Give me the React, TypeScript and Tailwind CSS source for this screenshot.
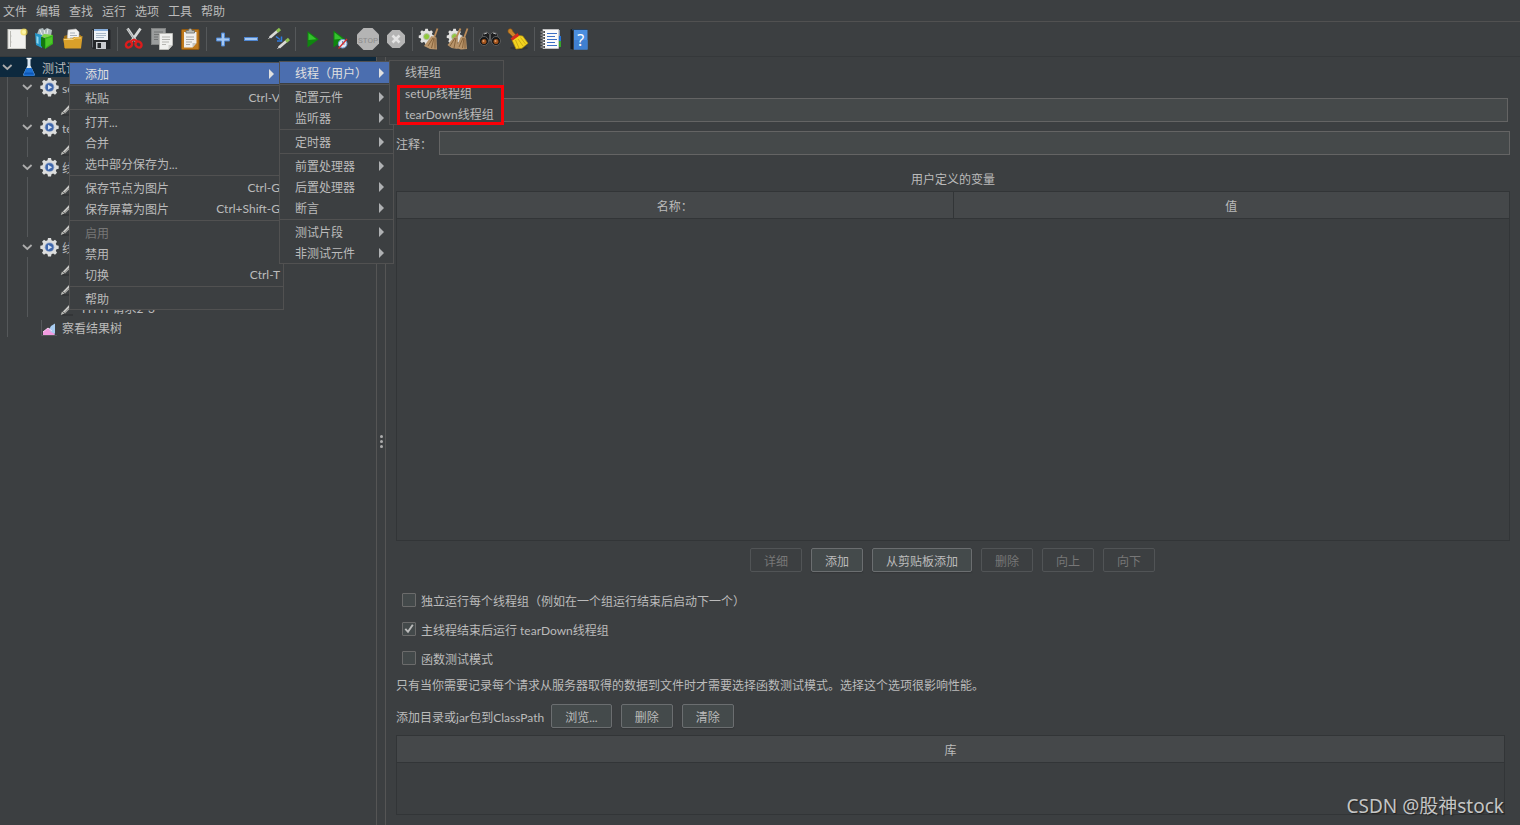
import React, { useState } from 'react';

type IconProps = { children: React.ReactNode };

function Icon24({ children }: IconProps) {
  return (
    <svg width="24" height="24" viewBox="0 0 24 24" aria-hidden="true" className="shrink-0">
      {children}
    </svg>
  );
}

const NewIcon = () => (
  <Icon24>
    <rect x="3" y="2.5" width="17.5" height="19" fill="#f1f1ef" stroke="#c9c9c4" />
    <path d="M5.5 4v16M5 9h1.5M5 15h1.5" stroke="#b9b9b4" strokeWidth="1" />
    <circle cx="19" cy="5" r="3.600" fill="#f3dc4a" opacity=".7" />
    <circle cx="19" cy="5" r="2" fill="#fdf6a6" />
  </Icon24>
);

const TemplatesIcon = () => (
  <Icon24>
    <path d="M4 7 6 2l4-1 1 2 3-2 5 2-1 6-7 2z" fill="#aebabd" />
    <path d="M7 3l2 5M11 3l1 4M15 2l-1 5" stroke="#e9eeee" />
    <path d="M2 6l7 2v13l-6-3z" fill="#2596c8" />
    <path d="M3.5 9l2 1v7l-2-1z" fill="#8fd6ef" />
    <path d="M8 10l3-3 9 1-2 3z" fill="#7ed649" />
    <path d="M8 10l4 1v11l-4-3z" fill="#13780f" />
    <path d="M12 11l8-3v9l-8 5z" fill="#36b51b" />
    <path d="M13 12l6-2v6l-6 4z" fill="#5ed233" opacity=".6" />
  </Icon24>
);

const OpenIcon = () => (
  <Icon24>
    <path d="M3 9l3-1h14v13H3z" fill="#9a6c14" />
    <path d="M7 3l8-1 3 3v10H6z" fill="#f3f3f3" stroke="#bcbcbc" strokeWidth=".6" />
    <path d="M9 6h5M9 8.500h7M9 11h7" stroke="#a9b0b8" />
    <path d="M2 11.500h9l2-1.500h4l4.500-1L20 21.500H4z" fill="#d9a02a" />
    <path d="M3 12.500h9l2-1.500h6" stroke="#f6d27a" fill="none" />
  </Icon24>
);

const SaveIcon = () => (
  <Icon24>
    <path d="M2.500 3.500l1-1.500h17l1 1.500V22H4l-1.500-1.500z" fill="#24272a" />
    <path d="M3.500 3v17.500" stroke="#6a6e73" />
    <rect x="5" y="2" width="14" height="11" fill="#eef3f8" />
    <rect x="5" y="2" width="14" height="2" fill="#88aedb" />
    <path d="M7 6.500h10M7 8.500h10M7 10.500h8" stroke="#a9b9c9" />
    <rect x="7" y="15" width="10" height="7" fill="#c9ccd0" />
    <rect x="8.500" y="16" width="3.500" height="5" fill="#25282b" />
  </Icon24>
);

const CutIcon = () => (
  <Icon24>
    <path d="M5.500 1.500L14.500 15M18.500 1.500L9 15" stroke="#d6d8d8" strokeWidth="2.800" />
    <path d="M5.500 2L14 14.500" stroke="#8d9191" strokeWidth=".7" />
    <ellipse cx="7" cy="17.500" rx="3.300" ry="2.700" transform="rotate(-40 7 17.500)" fill="none" stroke="#dd1c1c" strokeWidth="2.400" />
    <ellipse cx="16.500" cy="17.500" rx="3.300" ry="2.700" transform="rotate(40 16.500 17.500)" fill="none" stroke="#dd1c1c" strokeWidth="2.400" />
    <path d="M9 14l3-1.500 3 1.500" stroke="#dd1c1c" strokeWidth="2" fill="none" />
  </Icon24>
);

const CopyIcon = () => (
  <Icon24>
    <rect x="1.500" y="1.500" width="14" height="16" fill="#9b9d9d" stroke="#7f8181" />
    <path d="M4 5h9M4 7.500h9M4 10h4M4 12.500h4" stroke="#737575" />
    <path d="M9.500 6.500h13V18l-4 4.500h-9z" fill="#f0f0ee" stroke="#bbbbb7" />
    <path d="M12 10h8M12 12.500h8M12 15h7M12 17.500h4" stroke="#b4b4b0" />
    <path d="M22.500 18l-4 4.500V18z" fill="#cfcfcb" />
  </Icon24>
);

const PasteIcon = () => (
  <Icon24>
    <rect x="3.500" y="2.500" width="17.500" height="20" rx="1" fill="#c07a1c" stroke="#8e5810" />
    <path d="M6 5h12.500v11l-4 4.500H6z" fill="#f0f0ee" />
    <path d="M8 10h8M8 12.500h8M8 15h6M8 17.500h4" stroke="#a9a9a5" />
    <path d="M18.500 16l-4 4.500V16z" fill="#c4c4c0" />
    <path d="M8 6V3.500h2.500C10.500 1 14 1 14 3.500h2.500V6z" fill="#b9bcb6" stroke="#696c68" strokeWidth=".8" />
  </Icon24>
);

const PlusIcon = () => (
  <Icon24>
    <path d="M10.500 6h3v5h5v3h-5v5h-3v-5h-5v-3h5z" fill="#a5c8f2" stroke="#4f86d0" strokeWidth="1" />
  </Icon24>
);

const MinusIcon = () => (
  <Icon24>
    <rect x="5.500" y="10.500" width="13" height="3" fill="#a5c8f2" stroke="#4f86d0" />
  </Icon24>
);

const ToggleIcon = () => (
  <Icon24>
    <path d="M3 10.500L10.500 4" stroke="#d9d9d6" strokeWidth="2.800" />
    <path d="M10 4.500L13 2" stroke="#8cc152" strokeWidth="3.200" />
    <path d="M1.500 11.500l2-1.500" stroke="#efefef" strokeWidth="1" />
    <path d="M12 20.500L19.500 14" stroke="#d9d9d6" strokeWidth="2.800" />
    <path d="M19 14.500L22 12" stroke="#8cc152" strokeWidth="3.200" />
    <path d="M10.500 21.500l2-1.500" stroke="#efefef" strokeWidth="1" />
    <path d="M9 9.500l4 3M14.500 9.500v4.500H10" stroke="#2f7be0" strokeWidth="1.500" fill="none" />
  </Icon24>
);

const RunIcon = () => (
  <Icon24>
    <path d="M7.500 4L18.700 12.200 7.500 20.500z" fill="#0f860f" />
    <path d="M8.500 6l8 6.200-8 .8z" fill="#35c22e" />
  </Icon24>
);

const RunNoPauseIcon = () => (
  <Icon24>
    <path d="M5.500 3.500L17 12 5.500 20.500z" fill="#0f860f" />
    <path d="M6.500 5.500l8 6.200-8 .8z" fill="#35c22e" />
    <circle cx="14.700" cy="16.700" r="4.300" fill="#dfe9f5" stroke="#6f9fd6" />
    <path d="M14.700 14v3h2" stroke="#5479a8" fill="none" />
    <path d="M10.500 21.500L19 12" stroke="#d32f2f" strokeWidth="1.300" />
  </Icon24>
);

const StopIcon = () => (
  <Icon24>
    <path d="M7.500 1h9L23 7.500v9L16.500 23h-9L1 16.500v-9z" fill="#b4b4b4" />
    <text x="12" y="15.500" textAnchor="middle" fontSize="8" fontFamily="Roboto, sans-serif" fontWeight="400" fill="#8c8c8c">
      STOP
    </text>
  </Icon24>
);

const ShutdownIcon = () => (
  <Icon24>
    <path d="M8.300 3h7.400L21 8.300v7.400L15.700 21H8.300L3 15.700V8.300z" fill="#b4b4b4" />
    <path d="M8.500 8.500l7 7M15.500 8.500l-7 7" stroke="#e4e4e4" strokeWidth="2.600" />
  </Icon24>
);

const gearPoints =
  'M8 1h3l.5 2.200 1.600.7L15 2.700l2 2-1.200 1.900.7 1.600 2.200.5v3l-2.200.5-.7 1.600L17 15.700l-2 2-1.900-1.200-1.600.7L11 19.400H8l-.5-2.200-1.600-.7L4 17.700l-2-2 1.200-1.900-.7-1.600-2.200-.5v-3l2.200-.5.7-1.600L2 4.700l2-2 1.900 1.200 1.600-.7z';

const ClearIcon = () => (
  <Icon24>
    <g transform="translate(1.500 1) scale(.85)">
      <path d={gearPoints} fill="#e2e2e0" />
      <circle cx="9.500" cy="10.200" r="3.600" fill="#8fc93c" stroke="#b9bcb4" />
    </g>
    <path d="M20.500 1.500L17 11" stroke="#b98a58" strokeWidth="1.800" />
    <path d="M14.500 9l5 1.500.5 12-7-.5-6-3z" fill="#b8946a" />
    <path d="M16 11l-5 8M17 11l-2.500 10M18 11.500v10" stroke="#7f5c36" strokeWidth=".9" />
  </Icon24>
);

const ClearAllIcon = () => (
  <Icon24>
    <g transform="translate(1.500 1) scale(.85)">
      <path d={gearPoints} fill="#e2e2e0" />
      <circle cx="9.500" cy="10.200" r="3.600" fill="#8fc93c" stroke="#b9bcb4" />
    </g>
    <path d="M15.500 1.500L11 11M22.500 1.500L19 11" stroke="#b98a58" strokeWidth="1.800" />
    <path d="M9.500 9.500l3.500 1-.5 11.500-6-1-4-3zM16 9.500l5 1 1 11.500-6 .5-5-1.500z" fill="#b8946a" />
    <path d="M10 11l-5 8M11 11l-2 10M18 11l-4 9M19 11l-1.500 10M20 11.500v10" stroke="#7f5c36" strokeWidth=".9" />
  </Icon24>
);

const SearchIcon = () => (
  <Icon24>
    <path d="M5 6.500L9 5l2.500 2.500V14L3 16zM19 6.500L15 5l-2.500 2.500V14l8.500 2z" fill="#1d1e1f" stroke="#686a6b" strokeWidth=".8" />
    <circle cx="6" cy="14" r="4.500" fill="#151617" stroke="#5c5e5f" />
    <circle cx="18" cy="14" r="4.500" fill="#151617" stroke="#5c5e5f" />
    <circle cx="6" cy="14.500" r="2.500" fill="#a4541c" />
    <circle cx="18" cy="14.500" r="2.500" fill="#a4541c" />
    <circle cx="5.500" cy="14" r="1" fill="#e0a070" />
    <circle cx="17.500" cy="14" r="1" fill="#e0a070" />
    <path d="M6 7l3-1M15 6l3 1" stroke="#b5b7b8" />
  </Icon24>
);

const BroomIcon = () => (
  <Icon24>
    <ellipse cx="13" cy="21" rx="9" ry="1.800" fill="#26292b" opacity=".5" />
    <path d="M2.500 2.500C4 1 6.500 2 6.500 4L10 8 7 10 3.500 6.500C2 6 1.500 4 2.500 2.500z" fill="#c8842c" stroke="#8a5412" strokeWidth=".7" />
    <path d="M6 13l6.500-4.500L16.700 9 22 16.300 16 21.300 10 22z" fill="#f2d31f" stroke="#b08f0c" strokeWidth=".7" />
    <path d="M4.500 11.500L11.500 6l1.700 2.700L6.500 13.500z" fill="#d52b1e" />
    <path d="M9.500 13l3.500 8M12 12l5 7M14.500 10.500l5 6.500" stroke="#c3a012" strokeWidth=".8" />
  </Icon24>
);

const LogIcon = () => (
  <Icon24>
    <path d="M18 3h3v6h-3z" fill="#8a9bb5" />
    <path d="M18 9h4v5h-4z" fill="#2774d8" />
    <path d="M18 14h4v6h-4z" fill="#35a52c" />
    <rect x="4" y="2.500" width="15.500" height="19" fill="#fafafa" stroke="#d0d0d0" strokeWidth=".7" />
    <path d="M8 6.500h10M8 9.500h8M8 12.500h10M8 15.500h8M8 18.500h10" stroke="#3c6fc4" strokeWidth="1.100" />
    <path d="M1.500 5h4.500M1.500 8h4.500M1.500 11h4.500M1.500 14h4.500M1.500 17h4.500M1.500 20h4.500" stroke="#2a2c2e" strokeWidth="1.800" />
    <path d="M1.500 5h4M1.500 8h4M1.500 11h4M1.500 14h4M1.500 17h4M1.500 20h4" stroke="#e8e8e8" strokeWidth=".8" />
  </Icon24>
);

const HelpIcon = () => (
  <Icon24>
    <path d="M3.500 2.500L6 1.700V22.500l-2.500-.7z" fill="#16191c" />
    <path d="M5 2h15.500v1.500H5z" fill="#28425f" />
    <rect x="7" y="3" width="13.500" height="19.500" fill="#4b8ede" />
    <rect x="7" y="13" width="13.500" height="9.500" fill="#3f7fd0" />
    <text x="13.800" y="18.500" textAnchor="middle" fontSize="16" fontFamily="Noto Sans, sans-serif" fill="#ffffff">
      ?
    </text>
  </Icon24>
);

const FlaskIcon = () => (
  <svg width="18" height="20" viewBox="0 0 18 20" aria-hidden="true">
    <path d="M7.500 2v6.500L3.500 17c-.5 1.500.5 2 1.500 2h8c1 0 2-.5 1.500-2l-4-8.500V2z" fill="#dbe8f2" />
    <path d="M6.500 1.500h5" stroke="#f4f4f4" strokeWidth="1.400" />
    <path d="M6.300 11h5.400l2.800 6c.5 1.500-.5 2-1.500 2H5c-1 0-2-.5-1.500-2z" fill="#1f72d2" />
    <path d="M5 15.500h8l.8 2H4.200z" fill="#0e56b4" />
  </svg>
);

const GearIcon = () => (
  <svg width="20" height="20" viewBox="0 0 20 20" aria-hidden="true">
    <path d={gearPoints} fill="#dcdddd" />
    <circle cx="9.500" cy="10.200" r="4.800" fill="#8fa3c8" />
    <circle cx="9.500" cy="10.200" r="3.900" fill="#3f67ab" />
    <path d="M8 7.700l4.200 2.500L8 12.700z" fill="#d5e0f2" />
  </svg>
);

const PencilIcon = () => (
  <svg width="20" height="20" viewBox="0 0 20 20" aria-hidden="true">
    <path d="M2 18h11" stroke="#303335" strokeWidth="1.500" />
    <path d="M4 15.500L13.500 5.500" stroke="#c9c9c6" strokeWidth="3" />
    <path d="M4.500 16L14 6" stroke="#7d7d7a" strokeWidth="1" />
    <path d="M.8 18l1.200-3.500 2.500 2z" fill="#b9b9b5" />
  </svg>
);

const ResultIcon = () => (
  <svg width="18" height="18" viewBox="0 0 18 18" aria-hidden="true" className="relative top-px">
    <path d="M1.500 1v15.500H17" stroke="#55585a" fill="none" />
    <path d="M3 16v-3l5-4 4 2 3 5z" fill="#f29be0" />
    <path d="M9 10.500l2-3.500 4-2.500V15l-4-2z" fill="#a9cdf2" />
    <path d="M3 13l5-4 4 3" stroke="#ffd6f6" fill="none" />
  </svg>
);

const Chevron = () => (
  <svg width="12" height="8" viewBox="0 0 12 8" aria-hidden="true" className="ml-px">
    <path d="M2 2l4.300 4L10.600 2" fill="none" stroke="#adadad" strokeWidth="1.800" />
  </svg>
);

const toolGroups: { name: string; icon: React.ReactNode }[][] = [
  [
    { name: '新建', icon: <NewIcon /> },
    { name: '模板', icon: <TemplatesIcon /> },
    { name: '打开', icon: <OpenIcon /> },
    { name: '保存', icon: <SaveIcon /> },
  ],
  [
    { name: '剪切', icon: <CutIcon /> },
    { name: '复制', icon: <CopyIcon /> },
    { name: '粘贴', icon: <PasteIcon /> },
  ],
  [
    { name: '展开', icon: <PlusIcon /> },
    { name: '折叠', icon: <MinusIcon /> },
    { name: '切换', icon: <ToggleIcon /> },
  ],
  [
    { name: '启动', icon: <RunIcon /> },
    { name: '不停顿开始', icon: <RunNoPauseIcon /> },
    { name: '停止', icon: <StopIcon /> },
    { name: '关闭', icon: <ShutdownIcon /> },
  ],
  [
    { name: '清除', icon: <ClearIcon /> },
    { name: '清除全部', icon: <ClearAllIcon /> },
  ],
  [
    { name: '查找', icon: <SearchIcon /> },
    { name: '重置', icon: <BroomIcon /> },
  ],
  [
    { name: '函数助手', icon: <LogIcon /> },
    { name: '帮助', icon: <HelpIcon /> },
  ],
];

function Toolbar() {
  return (
    <div role="toolbar" className="flex h-[35px] items-center border-b border-[#35383a] pl-[3px]">
      {toolGroups.map((group, i) => (
        <React.Fragment key={i}>
          {i > 0 && <span className="mx-0.5 h-6 w-px bg-[#55585a]" />}
          {group.map((tool) => (
            <button key={tool.name} type="button" aria-label={tool.name} className="flex size-7 items-center justify-center">
              {tool.icon}
            </button>
          ))}
        </React.Fragment>
      ))}
    </div>
  );
}

type Node = { depth: number; kind: 'plan' | 'group' | 'sampler' | 'result'; label?: string };

const nodes: Node[] = [
  { depth: 0, kind: 'plan', label: '测试计划' },
  { depth: 1, kind: 'group', label: 'setUp' },
  { depth: 2, kind: 'sampler' },
  { depth: 1, kind: 'group', label: 'tearDown' },
  { depth: 2, kind: 'sampler' },
  { depth: 1, kind: 'group', label: '线程组' },
  { depth: 2, kind: 'sampler' },
  { depth: 2, kind: 'sampler' },
  { depth: 2, kind: 'sampler' },
  { depth: 1, kind: 'group', label: '线程组' },
  { depth: 2, kind: 'sampler' },
  { depth: 2, kind: 'sampler' },
  { depth: 2, kind: 'sampler', label: 'HTTP请求2-3' },
  { depth: 1, kind: 'result', label: '察看结果树' },
];

const nodeIcons = {
  plan: <FlaskIcon />,
  group: <GearIcon />,
  sampler: <PencilIcon />,
  result: <ResultIcon />,
};

function Tree() {
  return (
    <ul role="tree" className="w-[376px] shrink-0">
      {nodes.map((node, i) => {
        const branch = node.kind === 'plan' || node.kind === 'group';
        return (
          <li key={i} role="treeitem" aria-selected={i === 0} className={i === 0 ? 'flex h-5 items-center bg-[#0d293e]' : 'flex h-5 items-center'}>
            {Array.from({ length: node.depth }, (_, d) => (
              <span key={d} className="flex h-5 w-5 shrink-0 pl-[7px]">
                <span className="w-px bg-[#55585a]" />
              </span>
            ))}
            <span className="flex w-5 shrink-0 items-center">{branch && <Chevron />}</span>
            <span className="flex w-5 shrink-0 items-center">{nodeIcons[node.kind]}</span>
            {node.label && <span className="pt-1 pl-0.5 leading-4 whitespace-nowrap">{node.label}</span>}
          </li>
        );
      })}
    </ul>
  );
}

type Item = { label: string; keys?: string; sub?: boolean; active?: boolean; disabled?: boolean };

function Menu({ groups, className }: { groups: Item[][]; className: string }) {
  return (
    <div role="menu" className={`absolute border border-[#515151] bg-[#3c3f41] ${className}`}>
      {groups.map((group, i) => (
        <React.Fragment key={i}>
          {i > 0 && <div role="separator" className="my-px h-px bg-[#515151]" />}
          {group.map((item) => (
            <button
              key={item.label}
              type="button"
              role="menuitem"
              disabled={item.disabled}
              className={`flex h-[21px] w-full items-center pl-[15px] whitespace-nowrap ${
                item.active ? 'bg-[#4b6eaf] text-[#e0e0e0]' : item.disabled ? 'text-[#777777]' : ''
              }`}
            >
              <span className="flex-1 pt-0.5 text-left">{item.label}</span>
              {item.keys && <span className="pt-px pr-[3px]">{item.keys}</span>}
              {item.sub && (
                <svg width="5" height="10" viewBox="0 0 5 10" aria-hidden="true" className="mr-[9px]">
                  <path d="M0 0l5 5-5 5z" fill={item.active ? '#e0e0e0' : '#afb1b3'} />
                </svg>
              )}
            </button>
          ))}
        </React.Fragment>
      ))}
    </div>
  );
}

const contextMenu: Item[][] = [
  [{ label: '添加', sub: true, active: true }],
  [{ label: '粘贴', keys: 'Ctrl-V' }],
  [{ label: '打开...' }, { label: '合并' }, { label: '选中部分保存为...' }],
  [
    { label: '保存节点为图片', keys: 'Ctrl-G' },
    { label: '保存屏幕为图片', keys: 'Ctrl+Shift-G' },
  ],
  [{ label: '启用', disabled: true }, { label: '禁用' }, { label: '切换', keys: 'Ctrl-T' }],
  [{ label: '帮助' }],
];

const addMenu: Item[][] = [
  [{ label: '线程（用户）', sub: true, active: true }],
  [
    { label: '配置元件', sub: true },
    { label: '监听器', sub: true },
  ],
  [{ label: '定时器', sub: true }],
  [
    { label: '前置处理器', sub: true },
    { label: '后置处理器', sub: true },
    { label: '断言', sub: true },
  ],
  [
    { label: '测试片段', sub: true },
    { label: '非测试元件', sub: true },
  ],
];

const threadMenu: Item[][] = [[{ label: '线程组' }, { label: 'setUp线程组' }, { label: 'tearDown线程组' }]];

function Button({ children, disabled }: { children: React.ReactNode; disabled?: boolean }) {
  return (
    <button
      type="button"
      disabled={disabled}
      className={`h-6 rounded-[2px] border px-[13px] pt-1 leading-[18px] whitespace-nowrap ${
        disabled ? 'border-[#515456] text-[#777777]' : 'border-[#6b6e70] bg-[#444a4b] shadow-[0_1px_1px_#333638]'
      }`}
    >
      {children}
    </button>
  );
}

function Check({ label, initial = false }: { label: string; initial?: boolean }) {
  const [checked, setChecked] = useState(initial);
  return (
    <label className="flex h-[29px] items-center gap-[5px]">
      <span className="grid">
        <input
          type="checkbox"
          checked={checked}
          onChange={() => setChecked(!checked)}
          className="size-3.5 appearance-none rounded-[1px] border border-[#6b6b6b] bg-[#43494a] [grid-area:1/1]"
        />
        {checked && (
          <svg width="14" height="14" viewBox="0 0 14 14" aria-hidden="true" className="pointer-events-none [grid-area:1/1]">
            <path d="M3.300 6.800l2.700 3L10.800 2.800" fill="none" stroke="#bbbbbb" strokeWidth="1.900" />
          </svg>
        )}
      </span>
      <span className="pt-1">{label}</span>
    </label>
  );
}

function Panel() {
  return (
    <main className="flex min-w-0 flex-1 flex-col px-2.5 pt-[41px] pb-2.5">
      <div className="flex h-6 pr-0.5 pl-[43px]">
        <input aria-label="名称" className="h-6 min-w-0 flex-1 border border-[#646464] bg-[#45494a] px-1.5 outline-none" />
      </div>
      <div className="mt-[9px] flex h-6 items-center">
        <label htmlFor="comment" className="w-[43px] shrink-0 pt-1">
          注释：
        </label>
        <input id="comment" className="h-6 min-w-0 flex-1 border border-[#646464] bg-[#45494a] px-1.5 outline-none" />
      </div>
      <h2 className="mt-3 h-6 text-center leading-[26px]">用户定义的变量</h2>
      <div className="min-h-40 flex-1 border border-[#323537]">
        <table className="w-full table-fixed border-collapse">
          <thead>
            <tr className="h-[26px] border-b border-[#323537] bg-[#45484a]">
              <th scope="col" className="border-r border-[#323537] pt-1 font-normal">
                名称：
              </th>
              <th scope="col" className="pt-1 font-normal">
                值
              </th>
            </tr>
          </thead>
          <tbody />
        </table>
      </div>
      <div className="mt-[7px] flex justify-center gap-[9px] pr-px">
        <Button disabled>详细</Button>
        <Button>添加</Button>
        <Button>从剪贴板添加</Button>
        <Button disabled>删除</Button>
        <Button disabled>向上</Button>
        <Button disabled>向下</Button>
      </div>
      <div className="mt-[13px] flex flex-col items-start pl-1.5">
        <Check label="独立运行每个线程组（例如在一个组运行结束后启动下一个）" />
        <Check label="主线程结束后运行 tearDown线程组" initial />
        <Check label="函数测试模式" />
      </div>
      <p className="h-[25px] pt-0.5 leading-6">
        只有当你需要记录每个请求从服务器取得的数据到文件时才需要选择函数测试模式。选择这个选项很影响性能。
      </p>
      <div className="mt-[7px] flex items-center gap-[9px]">
        <span className="-mr-0.5 pt-1">添加目录或jar包到ClassPath</span>
        <Button>浏览...</Button>
        <Button>删除</Button>
        <Button>清除</Button>
      </div>
      <div className="mt-[7px] mr-[5px] h-20 border border-[#323537]">
        <table className="w-full border-collapse">
          <thead>
            <tr className="h-[26px] border-b border-[#323537] bg-[#45484a]">
              <th scope="col" className="pt-1 font-normal">
                库
              </th>
            </tr>
          </thead>
          <tbody />
        </table>
      </div>
    </main>
  );
}

export default function App() {
  return (
    <div className="relative flex min-h-screen flex-col overflow-hidden bg-[#3c3f41] font-[Lato,'Noto_Sans_CJK_SC',sans-serif] text-xs text-[#bbbbbb]">
      <nav className="flex h-[22px] items-center gap-[9px] border-b border-[#515151] pt-0.5 pl-[3px]">
        {['文件', '编辑', '查找', '运行', '选项', '工具', '帮助'].map((name) => (
          <button key={name} type="button">
            {name}
          </button>
        ))}
      </nav>
      <Toolbar />
      <div className="flex flex-1">
        <Tree />
        <div role="separator" className="flex w-2.5 shrink-0 flex-col items-center justify-center gap-0.5 border-x border-[#555555]">
          <span className="size-[3px] rounded-full bg-[#adadad]" />
          <span className="size-[3px] rounded-full bg-[#adadad]" />
          <span className="size-[3px] rounded-full bg-[#adadad]" />
        </div>
        <Panel />
      </div>
      <Menu groups={contextMenu} className="top-[62px] left-[69px] w-[215px]" />
      <Menu groups={addMenu} className="top-[61px] left-[279px] w-[115px]" />
      <Menu groups={threadMenu} className="top-[60px] left-[389px] w-[115px]" />
      <div className="pointer-events-none absolute top-[85px] left-[397px] h-10 w-[107px] border-3 border-[#fb0007]" />
      <div className="pointer-events-none absolute right-4 bottom-[5px] font-['Noto_Sans','Noto_Sans_CJK_SC',sans-serif] text-[19px] leading-7 text-[#c4c5c5] [text-shadow:1px_1px_1px_#222]">
        CSDN @股神stock
      </div>
    </div>
  );
}
